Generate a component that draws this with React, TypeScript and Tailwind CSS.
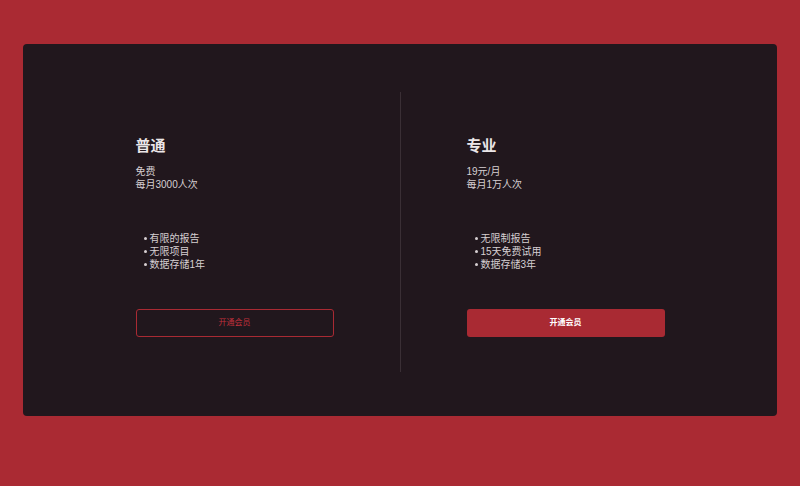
import React, { FC } from "react";

type Plan = {
  name: string;
  price: string;
  quota: string;
  features: string[];
  primary: boolean;
};

const plans: Plan[] = [
  {
    name: "普通",
    price: "免费",
    quota: "每月3000人次",
    features: ["有限的报告", "无限项目", "数据存储1年"],
    primary: false,
  },
  {
    name: "专业",
    price: "19元/月",
    quota: "每月1万人次",
    features: ["无限制报告", "15天免费试用", "数据存储3年"],
    primary: true,
  },
];

const PlanColumn: FC<{ plan: Plan }> = ({ plan }) => (
  <div className="w-[198px] pt-[45px] pb-[35px] flex flex-col">
    <h2 className="text-[15px] leading-[18px] font-bold text-[#ebe6e8]">{plan.name}</h2>
    <div className="mt-[10px] text-[10px] leading-[13px] text-[#d6cfd2]">
      <p>{plan.price}</p>
      <p>{plan.quota}</p>
    </div>
    <ul className="mt-[41px] pl-[8px] text-[10px] leading-[13px] text-[#d6cfd2]">
      {plan.features.map((f) => (
        <li key={f} className="flex items-center gap-[2px]">
          <span className="w-[3px] h-[3px] rounded-full bg-[#d6cfd2]" />
          <span className="ml-[1px]">{f}</span>
        </li>
      ))}
    </ul>
    <button
      className={
        plan.primary
          ? "mt-[38px] h-[28px] w-full rounded-[3px] bg-[#a92a33] text-[8px] font-bold text-white"
          : "mt-[38px] h-[28px] w-full rounded-[3px] border border-[#a92a33] text-[8px] text-[#c0303c]"
      }
    >
      开通会员
    </button>
  </div>
);

const App: FC = () => {
  return (
    <div
      className="w-[800px] h-[486px] bg-[#aa2a33] pt-[44px] px-[23px]"
      style={{ fontFamily: '"Liberation Sans", "Noto Sans CJK SC", sans-serif' }}
    >
      <div className="h-[372px] rounded-[4px] bg-[#21171d] flex justify-center pt-[48px]">
        <div className="flex items-start">
          <PlanColumn plan={plans[0]} />
          <div className="mx-[66px] w-px h-[280px] bg-[#3a2f35]" />
          <PlanColumn plan={plans[1]} />
        </div>
      </div>
    </div>
  );
};

export default App;
